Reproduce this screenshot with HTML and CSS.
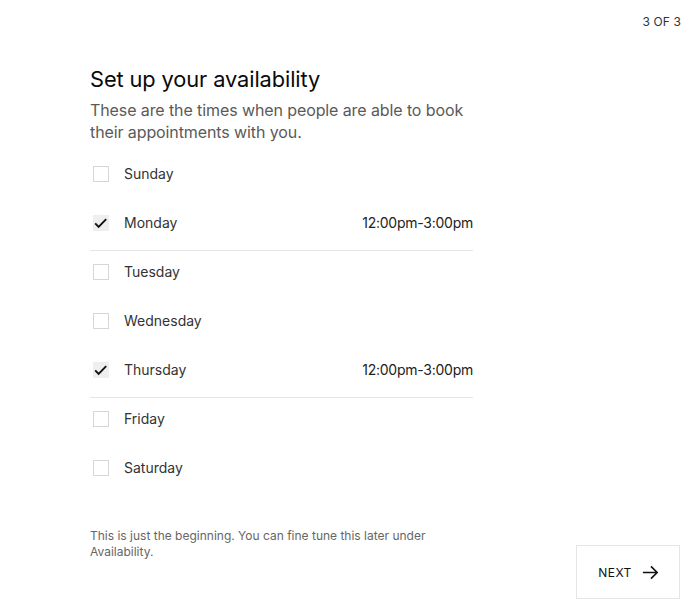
FILE: index.html
```html
<!DOCTYPE html>
<html lang="en">
<head>
<meta charset="utf-8">
<title>Set up your availability</title>
<link rel="stylesheet" href="styles.css">
</head>
<body>
<div class="page">
  <header class="topbar">
    <span class="step">3 OF 3</span>
  </header>
  <main class="content">
    <h1 class="title">Set up your availability</h1>
    <p class="subtitle">These are the times when people are able to book their appointments with you.</p>
    <ul class="days">
      <li class="day">
        <span class="box"></span>
        <span class="name">Sunday</span>
      </li>
      <li class="day day-on">
        <span class="box box-on"><svg viewBox="0 0 16 16" width="16" height="16"><path d="M2.2 8.4 L5.6 11.8 L13.2 4.2" fill="none" stroke="#111" stroke-width="1.9"/></svg></span>
        <span class="name">Monday</span>
        <span class="hours">12:00pm-3:00pm</span>
      </li>
      <li class="day">
        <span class="box"></span>
        <span class="name">Tuesday</span>
      </li>
      <li class="day">
        <span class="box"></span>
        <span class="name">Wednesday</span>
      </li>
      <li class="day day-on">
        <span class="box box-on"><svg viewBox="0 0 16 16" width="16" height="16"><path d="M2.2 8.4 L5.6 11.8 L13.2 4.2" fill="none" stroke="#111" stroke-width="1.9"/></svg></span>
        <span class="name">Thursday</span>
        <span class="hours">12:00pm-3:00pm</span>
      </li>
      <li class="day">
        <span class="box"></span>
        <span class="name">Friday</span>
      </li>
      <li class="day">
        <span class="box"></span>
        <span class="name">Saturday</span>
      </li>
    </ul>
  </main>
  <footer class="bottom">
    <p class="note">This is just the beginning. You can fine tune this later under Availability.</p>
    <button class="next" type="button">NEXT
      <svg viewBox="0 0 20 20" width="19" height="19"><path d="M2 10 H17 M10.5 3.5 L17 10 L10.5 16.5" fill="none" stroke="#111" stroke-width="1.7"/></svg>
    </button>
  </footer>
</div>
</body>
</html>
```

FILE: styles.css
```css
* { box-sizing: border-box; }
html, body { margin: 0; padding: 0; background: #fff; }
body {
  font-family: Inter, "Liberation Sans", Arial, sans-serif;
  color: #111;
}
.page {
  width: 700px;
  height: 605px;
  display: flex;
  flex-direction: column;
}
.topbar {
  display: flex;
  justify-content: flex-end;
  padding: 14px 19px 0 0;
  height: 64px;
}
.step {
  font-size: 12px;
  line-height: 16px;
  letter-spacing: 0.1px;
  color: #333;
}
.content {
  margin-left: 90px;
  width: 383px;
}
.title {
  margin: 0;
  font-size: 21.8px;
  line-height: 28px;
  font-weight: 400;
  color: #0a0a0a;
  letter-spacing: -0.1px;
  padding-top: 1px;
}
.subtitle {
  margin: 6px 0 0;
  font-size: 16px;
  line-height: 22px;
  color: #5a5a5a;
  letter-spacing: -0.1px;
}
.days {
  list-style: none;
  margin: 10px 0 0;
  padding: 0;
}
.day {
  display: flex;
  align-items: center;
  padding: 11px 0 17px;
  height: 49px;
  border-bottom: 1px solid transparent;
  font-size: 14px;
  line-height: 20px;
  color: #333;
}
.day-on { border-bottom-color: #e6e6e6; }
.box {
  width: 16px;
  height: 16px;
  margin-left: 3px;
  margin-right: 15px;
  border: 1px solid #d6d6d6;
  flex: none;
  display: flex;
}
.box-on {
  border-color: #eeeeee;
  background: #efefef;
}
.box-on svg { margin: -1px; }
.name { flex: 1; }
.hours { color: #222; letter-spacing: -0.25px; }
.bottom {
  margin-top: 32px;
  display: flex;
  align-items: flex-start;
  justify-content: space-between;
  padding-left: 90px;
  padding-right: 20px;
}
.note {
  margin: 0;
  width: 340px;
  font-size: 12px;
  line-height: 16px;
  color: #666;
}
.next {
  margin-top: 17px;
  width: 104px;
  height: 54px;
  background: #fff;
  border: 1px solid #e6e6e6;
  display: flex;
  align-items: center;
  justify-content: center;
  gap: 9px;
  font-family: Inter, "Liberation Sans", Arial, sans-serif;
  font-size: 12px;
  letter-spacing: 0.4px;
  color: #111;
  padding: 0 0 0 2px;
}
.next svg { flex: none; }
```
